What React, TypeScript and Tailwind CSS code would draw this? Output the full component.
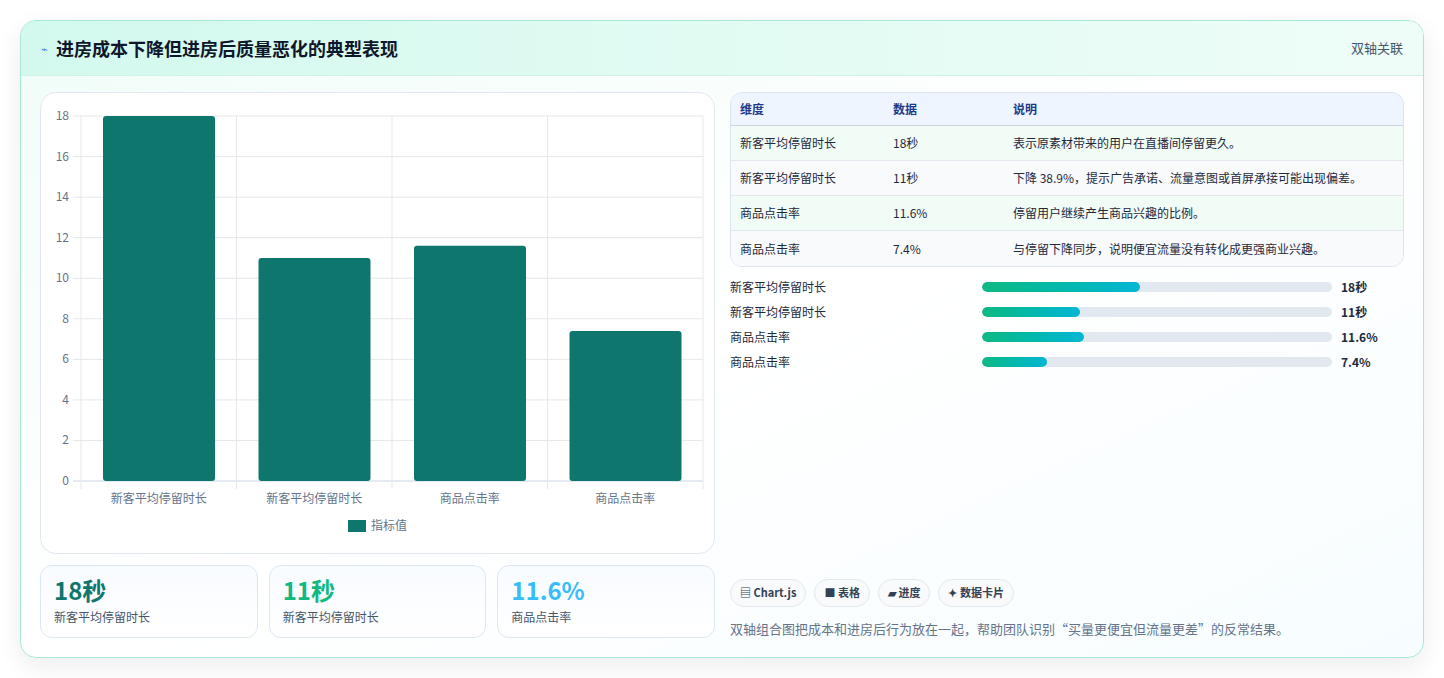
const F = { fontFamily: '"Noto Sans CJK SC", "Noto Sans", sans-serif' };

const bars = [
  { label: '新客平均停留时长', v: 18 },
  { label: '新客平均停留时长', v: 11 },
  { label: '商品点击率', v: 11.6 },
  { label: '商品点击率', v: 7.4 },
];

function Chart() {
  const x0 = 40, x1 = 662, y0 = 23, y1 = 388;
  const h = (y1 - y0) / 18;
  const cw = (x1 - x0) / 4;
  return (
    <svg width="675" height="462" className="block">
      {[0, 2, 4, 6, 8, 10, 12, 14, 16, 18].map((t) => (
        <g key={t}>
          <line x1={x0 - 8} x2={x1} y1={y1 - t * h} y2={y1 - t * h} stroke={t === 0 ? '#cbd5e1' : '#e5e7eb'} />
          <text x={x0 - 12} y={y1 - t * h + 4} textAnchor="end" fontSize="12" fill="#64748b" style={F}>{t}</text>
        </g>
      ))}
      {[0, 1, 2, 3, 4].map((i) => (
        <line key={i} x1={x0 + i * cw} x2={x0 + i * cw} y1={y0} y2={y1 + 8} stroke="#e5e7eb" />
      ))}
      {bars.map((b, i) => (
        <g key={i}>
          <rect x={x0 + i * cw + 22} y={y1 - b.v * h} width={112} height={b.v * h} rx="3" fill="#0f766e" />
          <text x={x0 + i * cw + cw / 2} y={y1 + 22} textAnchor="middle" fontSize="12" fill="#64748b" style={F}>{b.label}</text>
        </g>
      ))}
      <rect x="307" y="427" width="18" height="12" fill="#0f766e" />
      <text x="330" y="437" fontSize="12" fill="#64748b" style={F}>指标值</text>
    </svg>
  );
}

const rows = [
  ['新客平均停留时长', '18秒', '表示原素材带来的用户在直播间停留更久。'],
  ['新客平均停留时长', '11秒', '下降 38.9%，提示广告承诺、流量意图或首屏承接可能出现偏差。'],
  ['商品点击率', '11.6%', '停留用户继续产生商品兴趣的比例。'],
  ['商品点击率', '7.4%', '与停留下降同步，说明便宜流量没有转化成更强商业兴趣。'],
];

const progress = [
  ['新客平均停留时长', '18秒', 45],
  ['新客平均停留时长', '11秒', 28],
  ['商品点击率', '11.6%', 29],
  ['商品点击率', '7.4%', 18.5],
] as const;

export default function App() {
  return (
    <div className="w-[1444px] h-[678px] bg-white pt-5 px-5" style={F}>
      <div className="h-[638px] rounded-2xl border border-[#a7e8d8] bg-gradient-to-br from-[#f0fdf8] via-white to-[#f7fdff] shadow-[0_8px_24px_rgba(15,23,42,0.08)] overflow-hidden flex flex-col">
        <div className="h-[55px] shrink-0 flex items-center justify-between px-5 bg-gradient-to-r from-[#d3f9ee] to-[#effdf8] border-b border-[#d1f2e8]">
          <div className="flex items-center gap-2">
            <span className="text-[11px] text-[#3b82f6]">⌁</span>
            <span className="text-[18px] font-bold text-[#0f172a]">进房成本下降但进房后质量恶化的典型表现</span>
          </div>
          <span className="text-[13px] text-[#475569]">双轴关联</span>
        </div>
        <div className="flex-1 flex gap-[15px] px-[19px] pt-4 pb-[19px]">
          <div className="w-[675px] flex flex-col gap-[11px]">
            <div className="h-[462px] rounded-2xl border border-[#e2e8f0] bg-white overflow-hidden">
              <Chart />
            </div>
            <div className="flex gap-[11px]">
              {[
                ['18秒', 'text-[#0f766e]'],
                ['11秒', 'text-[#10b981]'],
                ['11.6%', 'text-[#38bdf8]'],
              ].map(([v, c], i) => (
                <div key={i} className="flex-1 h-[73px] rounded-xl border border-[#dbe7f3] bg-gradient-to-b from-[#f8fbff] to-white px-[13px] pt-2">
                  <div className={`text-[24px] font-bold leading-8 ${c}`}>{v}</div>
                  <div className="text-[12px] text-[#475569] mt-[2px]">{i === 2 ? '商品点击率' : '新客平均停留时长'}</div>
                </div>
              ))}
            </div>
          </div>
          <div className="flex-1 flex flex-col">
            <div className="rounded-xl border border-[#dbe3ee] overflow-hidden text-[12px] text-[#1e293b]">
              <div className="h-[33px] flex items-center bg-[#eef5ff] border-b border-[#cbd5e1] font-semibold text-[#1e3a8a]">
                <div className="w-[162px] pl-[9px]">维度</div>
                <div className="w-[120px]">数据</div>
                <div>说明</div>
              </div>
              {rows.map((r, i) => (
                <div key={i} className={`h-[35px] flex items-center ${i < 3 ? 'border-b border-[#e2e8f0]' : ''} ${i % 2 === 0 ? 'bg-[#f1fcf6]' : 'bg-[#f9fafc]'}`}>
                  <div className="w-[162px] pl-[9px]">{r[0]}</div>
                  <div className="w-[120px]">{r[1]}</div>
                  <div>{r[2]}</div>
                </div>
              ))}
            </div>
            <div className="mt-[7px] flex flex-col">
              {progress.map(([l, v, p], i) => (
                <div key={i} className="h-[25px] flex items-center text-[12px] text-[#1e293b]">
                  <div className="w-[252px]">{l}</div>
                  <div className="w-[350px] h-[10px] rounded-full bg-[#e2e8f0] overflow-hidden">
                    <div className="h-full rounded-full bg-gradient-to-r from-[#10b981] to-[#06b6d4]" style={{ width: `${p}%` }} />
                  </div>
                  <div className="ml-[9px] font-bold">{v}</div>
                </div>
              ))}
            </div>
            <div className="mt-auto">
              <div className="flex gap-2">
                {['▤ Chart.js', '■ 表格', '▰ 进度', '✦ 数据卡片'].map((t) => (
                  <span key={t} className="h-[28px] px-[9px] flex items-center rounded-full border border-[#e2e8f0] bg-[#f8fafc] text-[11px] font-semibold text-[#334155]">{t}</span>
                ))}
              </div>
              <p className="mt-[12px] text-[13px] text-[#64748b]">双轴组合图把成本和进房后行为放在一起，帮助团队识别“买量更便宜但流量更差”的反常结果。</p>
            </div>
          </div>
        </div>
      </div>
    </div>
  );
}
